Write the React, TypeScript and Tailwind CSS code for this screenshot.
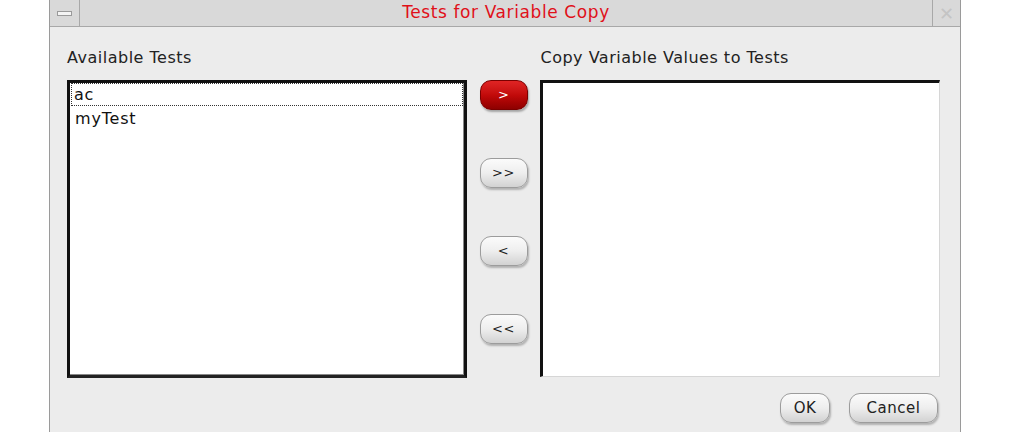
import React from "react";

const font = { fontFamily: '"DejaVu Sans", Verdana, sans-serif' };

function GrayBtn({ label, w, t = "text-[15px]" }: { label: string; w: string; t?: string }) {
  return (
    <button
      className={`${w} h-[30px] rounded-[11px] border border-[#9c9c9c] bg-gradient-to-b from-[#fbfbfb] via-[#eeeeee] to-[#d2d2d2] shadow-[1px_2px_2px_rgba(0,0,0,0.25)] flex items-center justify-center ${t} tracking-[0.5px] text-[#222]`}
    >
      {label}
    </button>
  );
}

export default function App() {
  return (
    <div className="w-[1013px] h-[432px] bg-white flex overflow-hidden" style={font}>
      <div className="ml-[49px] w-[912px] h-[432px] border-l border-r border-[#9a9a9a] bg-[#ececec] flex flex-col">
        {/* title bar */}
        <div className="h-[27px] flex bg-[#d9d9d9] border-b border-[#a8a8a8]">
          <div className="w-[30px] border-r border-[#a8a8a8] flex items-center justify-center">
            <div className="w-[15px] h-[5px] border border-[#9a9a9a] bg-[#f4f4f4]" />
          </div>
          <div className="flex-1 flex items-center justify-center text-[17px] tracking-[0.6px] text-[#e0101a]">
            Tests for Variable Copy
          </div>
          <div className="w-[28px] border-l border-[#a8a8a8] flex items-center justify-center text-[#c4c4c4] text-[18px]">
            ✕
          </div>
        </div>
        {/* body */}
        <div className="flex flex-col pl-[17px] pr-[20px] pt-[21px]">
          <div className="flex">
            <div className="flex flex-col w-[400px]">
              <div className="h-[32px] text-[16px] tracking-[0.5px] text-[#222] leading-[19px]">Available Tests</div>
              <div className="h-[298px] bg-white border-[3px] border-[#111] border-b-[#222] flex flex-col shadow-[inset_-1px_-1px_0_#888]">
                <div className="h-[23px] mx-[1px] border border-dotted border-[#333] pl-[2px] text-[16px] tracking-[0.8px] text-[#111] flex items-center">
                  ac
                </div>
                <div className="h-[26px] pl-[5px] text-[16px] tracking-[0.8px] text-[#111] flex items-center">myTest</div>
              </div>
            </div>
            <div className="w-[74px] flex flex-col items-center pt-[32px] gap-[48px]">
              <button className="w-[48px] h-[30px] rounded-[11px] border border-[#7a0000] bg-gradient-to-b from-[#e02424] via-[#c20a0a] to-[#8e0000] shadow-[1px_2px_2px_rgba(0,0,0,0.3)] flex items-center justify-center text-[13px] text-white">
                &gt;
              </button>
              <GrayBtn label=">>" w="w-[48px]" t="text-[13px]" />
              <GrayBtn label="<" w="w-[48px]" t="text-[13px]" />
              <GrayBtn label="<<" w="w-[48px]" t="text-[13px]" />
            </div>
            <div className="flex flex-col w-[400px]">
              <div className="h-[32px] text-[16px] tracking-[0.5px] text-[#222] leading-[19px]">Copy Variable Values to Tests</div>
              <div className="h-[297px] bg-white border-t-[3px] border-l-[3px] border-[#111] border-r border-b border-r-[#d6d6d6] border-b-[#d6d6d6]" />
            </div>
          </div>
          <div className="flex justify-end gap-[19px] mt-[15px] pr-[2px]">
            <GrayBtn label="OK" w="w-[50px]" />
            <GrayBtn label="Cancel" w="w-[89px]" />
          </div>
        </div>
      </div>
    </div>
  );
}
